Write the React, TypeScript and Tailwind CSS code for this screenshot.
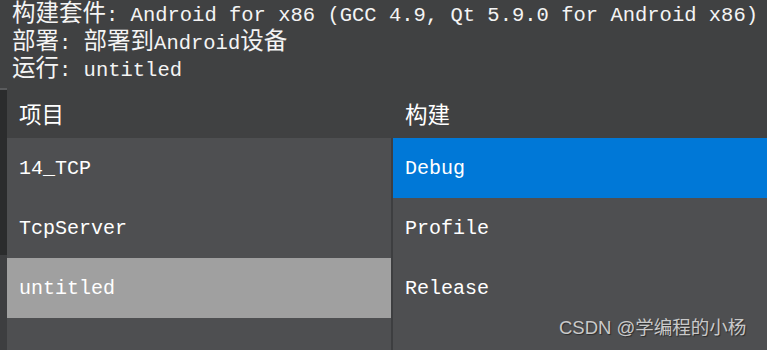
import React from "react";

const mono = { fontFamily: '"Liberation Mono", "Noto Sans CJK SC", monospace' };

function C({ children }: { children: React.ReactNode }) {
  return (
    <span className="inline-block text-[23.5px] leading-[24px] align-baseline" style={{ fontFamily: '"Noto Sans CJK SC", sans-serif' }}>
      {children}
    </span>
  );
}

function Line({ children }: { children: React.ReactNode }) {
  return (
    <div className="h-[27.5px] leading-[24px] whitespace-pre flex items-center">
      <div>{children}</div>
    </div>
  );
}

export default function App() {
  const left = ["14_TCP", "TcpServer", "untitled", ""];
  const right = ["Debug", "Profile", "Release", ""];
  return (
    <div className="w-[767px] h-[350px] bg-[#404142] relative overflow-hidden flex flex-col text-white" style={mono}>
      <div className="h-[88px] shrink-0 pl-[12px] text-[20.5px] text-[#f4f4f4]">
        <Line><C>构建套件</C>: Android for x86 (GCC 4.9, Qt 5.9.0 for Android x86)</Line>
        <Line><C>部署</C>: <C>部署到</C>Android<C>设备</C></Line>
        <Line><C>运行</C>: untitled</Line>
      </div>
      <div className="flex flex-1 min-h-0">
        <div className="w-[7px] flex flex-col shrink-0">
          <div className="h-[2px] bg-[#5a5b5d]" />
          <div className="h-[165px] bg-[#2b2c2d]" />
          <div className="flex-1 bg-[#3d3e40]" />
        </div>
        <div className="flex-1 flex flex-col">
          <div className="h-[50px] flex items-center bg-[#404142] shrink-0 text-[22.5px] leading-[26px]" style={{ fontFamily: '"Noto Sans CJK SC", sans-serif' }}>
            <div className="w-[384px] pl-[12px]">项目</div>
            <div className="pl-[14px]">构建</div>
          </div>
          <div className="flex flex-1 text-[20px]">
            <div className="w-[384px] flex flex-col bg-[#4e4f51]">
              {left.map((t, i) => (
                <div key={i} className={`h-[60px] shrink-0 flex items-center pl-[12px] pt-[1px] ${i === 2 ? "bg-[#a0a0a0]" : ""}`}>{t}</div>
              ))}
            </div>
            <div className="w-[2px] bg-[#3d3e40]" />
            <div className="flex-1 flex flex-col bg-[#4e4f51]">
              {right.map((t, i) => (
                <div key={i} className={`h-[60px] shrink-0 flex items-center pl-[12px] pt-[1px] ${i === 0 ? "bg-[#0078d7]" : ""}`}>{t}</div>
              ))}
            </div>
          </div>
        </div>
      </div>
      <div
        className="absolute left-[559px] top-[316px] text-[18.5px] leading-[24px] text-[#c9c9c9] whitespace-nowrap [text-shadow:1px_1px_1px_rgba(0,0,0,0.45)]"
        style={{ fontFamily: '"Liberation Sans", "Noto Sans CJK SC", sans-serif' }}
      >
        CSDN @学编程的小杨
      </div>
    </div>
  );
}
